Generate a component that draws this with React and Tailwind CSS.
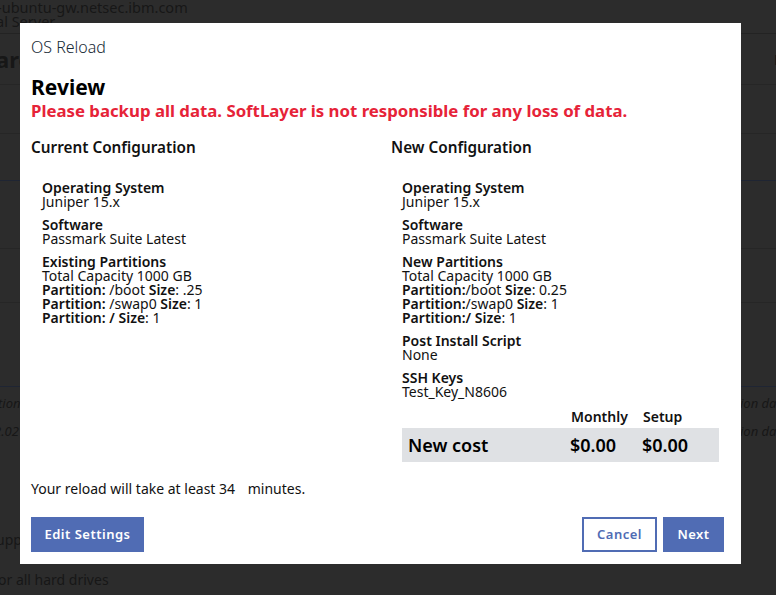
import React from "react";

const font = { fontFamily: "'Noto Sans', 'Open Sans', sans-serif" };

function Group({ title, children }) {
  return (
    <div className="mb-[9px]">
      <div className="text-[14px] font-semibold leading-[14px]">{title}</div>
      {children}
    </div>
  );
}

function Line({ children }) {
  return <div className="text-[14px] leading-[14px]">{children}</div>;
}

function Partition({ name, size, tight }) {
  return (
    <Line>
      <b className="font-semibold">Partition:</b>
      {tight ? "" : " "}
      {name} <b className="font-semibold">Size</b>: {size}
    </Line>
  );
}

function BackgroundPage() {
  return (
    <div className="h-[595px] w-full overflow-hidden bg-[#2c2c2c] text-[#171717]">
      <div className="h-[34px] border-b border-[#232323] text-[14.5px] leading-[14px]">
        <div className="-ml-[3px]">-ubuntu-gw.netsec.ibm.com</div>
        <div className="-ml-[4px]">al Server</div>
      </div>
      <div className="flex h-[50px] items-center justify-between">
        <div className="-ml-[4px] text-[22px] font-bold">are</div>
        <div className="mr-[-6px] text-[15px]">E</div>
      </div>
      <div className="h-[49px] border-t border-[#262626]" />
      <div className="h-[47px] border-t border-[#262626]" />
      <div className="h-[68px] border-t border-[#1f2533]" />
      <div className="h-[54px] border-t border-[#262626]" />
      <div className="h-[84px] border-t border-[#262626]" />
      <div className="border-t border-[#1f2533]" />
      <div className="flex h-[26px] items-end justify-between text-[13px] italic">
        <span className="-ml-[2px]">tion</span>
        <span className="w-[36px] overflow-hidden whitespace-nowrap">ion data</span>
      </div>
      <div className="flex h-[28px] items-end justify-between text-[13px] italic">
        <span className="-ml-[6px]">2.02</span>
        <span className="w-[36px] overflow-hidden whitespace-nowrap">ion data</span>
      </div>
      <div className="h-[96px] pt-[88px] text-[14px]">
        <span className="-ml-[4px]">upp</span>
      </div>
      <div className="pt-[32px] text-[14px]">
        <span className="-ml-[2px]">or all hard drives</span>
      </div>
    </div>
  );
}

export default function App() {
  return (
    <div className="relative h-[595px] w-full overflow-hidden" style={font}>
      <BackgroundPage />

      <div className="absolute left-[20px] top-[23px] flex h-[541px] w-[721px] flex-col bg-white pl-[11px] pr-[17px] text-[#111]">
        <div className="pt-[14px] text-[16px] font-light leading-[20px] text-[#152935]">OS Reload</div>
        <div className="mt-[17px] text-[21px] font-bold leading-[26px] text-black">Review</div>
        <div className="text-[16.8px] font-bold leading-[22px] text-[#e62338]">
          Please backup all data. SoftLayer is not responsible for any loss of data.
        </div>

        <div className="mt-[15px] grid grid-cols-[360px_1fr]">
          <div>
            <div className="text-[15.3px] font-semibold leading-[20px]">Current Configuration</div>
            <div className="mt-[24px] pl-[11px]">
              <Group title="Operating System">
                <Line>Juniper 15.x</Line>
              </Group>
              <Group title="Software">
                <Line>Passmark Suite Latest</Line>
              </Group>
              <Group title="Existing Partitions">
                <Line>Total Capacity 1000 GB</Line>
                <Partition name="/boot" size=".25" />
                <Partition name="/swap0" size="1" />
                <Line>
                  <b className="font-semibold">Partition: / Size</b>: 1
                </Line>
              </Group>
            </div>
          </div>

          <div>
            <div className="text-[15.3px] font-semibold leading-[20px]">New Configuration</div>
            <div className="mt-[24px] pl-[11px]">
              <Group title="Operating System">
                <Line>Juniper 15.x</Line>
              </Group>
              <Group title="Software">
                <Line>Passmark Suite Latest</Line>
              </Group>
              <Group title="New Partitions">
                <Line>Total Capacity 1000 GB</Line>
                <Partition name="/boot" size="0.25" tight />
                <Partition name="/swap0" size="1" tight />
                <Line>
                  <b className="font-semibold">Partition:/ Size</b>: 1
                </Line>
              </Group>
              <Group title="Post Install Script">
                <Line>None</Line>
              </Group>
              <Group title="SSH Keys">
                <Line>Test_Key_N8606</Line>
              </Group>

              <div className="w-[317px]">
                <div className="grid grid-cols-[168px_72px_77px] text-[14px] font-semibold leading-[18px]">
                  <div />
                  <div className="pl-[1px]">Monthly</div>
                  <div className="pl-[1px]">Setup</div>
                </div>
                <div className="mt-[2px] grid h-[34px] grid-cols-[168px_72px_77px] items-center bg-[#dfe1e4] text-[18px] font-semibold text-black">
                  <div className="pl-[6px]">New cost</div>
                  <div>$0.00</div>
                  <div>$0.00</div>
                </div>
              </div>
            </div>
          </div>
        </div>

        <div className="flex-1" />

        <div className="text-[14px] leading-[18px]">
          Your reload will take at least 34
          <span className="inline-block w-[9px]" /> minutes.
        </div>

        <div className="mb-[12px] mt-[19px] flex items-center justify-between">
          <button className="h-[35px] w-[113px] bg-[#506cb4] text-[13px] font-semibold tracking-[0.5px] text-white">
            Edit Settings
          </button>
          <div className="flex gap-[6px]">
            <button className="h-[35px] w-[75px] border-2 border-[#506cb4] bg-white text-[13px] font-semibold tracking-[0.5px] text-[#506cb4]">
              Cancel
            </button>
            <button className="h-[35px] w-[61px] bg-[#506cb4] text-[13px] font-semibold tracking-[0.5px] text-white">
              Next
            </button>
          </div>
        </div>
      </div>
    </div>
  );
}
